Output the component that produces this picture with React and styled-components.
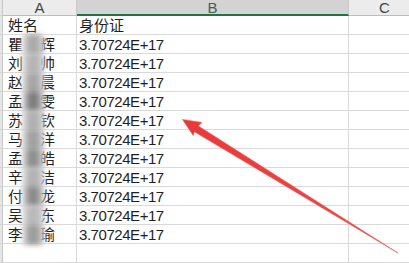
import React from 'react';
import styled, {createGlobalStyle} from 'styled-components';

const GlobalStyle = createGlobalStyle`
  body {
    margin: 0;
    background: #fff;
    overflow: hidden;
  }
`;

const people = [
  {first: '瞿', last: '辉', shade: '#a9a9a9'},
  {first: '刘', last: '帅', shade: '#b4b4b4'},
  {first: '赵', last: '晨', shade: '#a5a5a5'},
  {first: '孟', last: '雯', shade: '#7d7d7d'},
  {first: '苏', last: '钦', shade: '#b0b0b0'},
  {first: '马', last: '洋', shade: '#a0a0a0'},
  {first: '孟', last: '皓', shade: '#8e8e8e'},
  {first: '辛', last: '洁', shade: '#b2b2b2'},
  {first: '付', last: '龙', shade: '#8a8a8a'},
  {first: '吴', last: '东', shade: '#b8b8b8'},
  {first: '李', last: '瑜', shade: '#9c9c9c'},
];

const columns = [
  {key: 'A', width: 74},
  {key: 'B', width: 272, selected: true},
  {key: 'C', width: 72},
];

const Sheet = styled.div`
  position: relative;
  width: 409px;
  height: 263px;
  overflow: hidden;
  font-family: "Liberation Sans", "Noto Sans CJK SC", sans-serif;
  color: #1f1f1f;
`;

const HeaderRow = styled.div`
  display: flex;
  height: 16px;
`;

const Row = styled.div`
  display: flex;
  height: 19px;
`;

const RowNum = styled.div`
  flex: none;
  width: 3px;
  box-sizing: border-box;
  background: #e6e6e6;
  border-right: 1px solid #c8c8c8;
  border-bottom: 1px solid #d4d4d4;
`;

const ColHead = styled.div`
  flex: none;
  width: ${p => p.$width}px;
  box-sizing: border-box;
  background: ${p => (p.$selected ? '#d3d3d3' : '#ececec')};
  border-right: 1px solid #c9c9c9;
  border-bottom: ${p => (p.$selected ? '2px solid #217346' : '1px solid #bdbdbd')};
  display: flex;
  align-items: center;
  justify-content: center;
  font-size: 15px;
  line-height: 15px;
  color: ${p => (p.$selected ? '#3f6250' : '#444')};
`;

const Cell = styled.div`
  flex: none;
  width: ${p => p.$width}px;
  box-sizing: border-box;
  border-right: 1px solid #d9d9d9;
  border-bottom: 1px solid #d9d9d9;
  padding-left: ${p => p.$pad}px;
  display: flex;
  align-items: flex-end;
  white-space: nowrap;
  font-size: 15px;
  line-height: 17px;
`;

const Num = styled.span`
  letter-spacing: -0.45px;
`;

/* mosaic over the middle character of each name */
const Blurred = styled.span`
  position: relative;
  z-index: 1;
  display: inline-block;
  width: 22px;
  height: 21px;
  margin: 0 -4px -2px -1px;
  background: linear-gradient(
    90deg,
    #e4e4e4 0%,
    ${p => p.$shade} 35%,
    ${p => p.$shade} 65%,
    #d8d8d8 100%
  );
  filter: blur(2.5px);
`;

const Overlay = styled.svg`
  position: absolute;
  left: 0;
  top: 0;
  pointer-events: none;
`;

function NameCell({person}) {
  return (
    <Cell $width={74} $pad={5}>
      {person.first}
      <Blurred $shade={person.shade} />
      {person.last}
    </Cell>
  );
}

function Arrow() {
  return (
    <Overlay width="409" height="263" viewBox="0 0 409 263">
      <defs>
        <linearGradient id="shaft" x1="183" y1="120" x2="398" y2="253" gradientUnits="userSpaceOnUse">
          <stop offset="0" stopColor="#e8393a" />
          <stop offset="0.75" stopColor="#e94646" />
          <stop offset="1" stopColor="#b86878" />
        </linearGradient>
      </defs>
      <polygon
        points="182.5,119.5 202,122.4 198.4,126 398,253 194.4,131.8 193.2,135.6"
        fill="url(#shaft)"
        stroke="#ee5858"
        strokeWidth="0.6"
        strokeLinejoin="round"
      />
    </Overlay>
  );
}

export default function App() {
  return (
    <>
      <GlobalStyle />
      <Sheet>
        <HeaderRow>
          <RowNum />
          {columns.map(c => (
            <ColHead key={c.key} $width={c.width} $selected={c.selected}>
              {c.key}
            </ColHead>
          ))}
        </HeaderRow>
        <Row>
          <RowNum />
          <Cell $width={74} $pad={5}>姓名</Cell>
          <Cell $width={272} $pad={2}>身份证</Cell>
          <Cell $width={72} />
        </Row>
        {people.map((p, i) => (
          <Row key={i}>
            <RowNum />
            <NameCell person={p} />
            <Cell $width={272} $pad={2}>
              <Num>3.70724E+17</Num>
            </Cell>
            <Cell $width={72} />
          </Row>
        ))}
        <Row>
          <RowNum />
          <Cell $width={74} />
          <Cell $width={272} />
          <Cell $width={72} />
        </Row>
        <Arrow />
      </Sheet>
    </>
  );
}
